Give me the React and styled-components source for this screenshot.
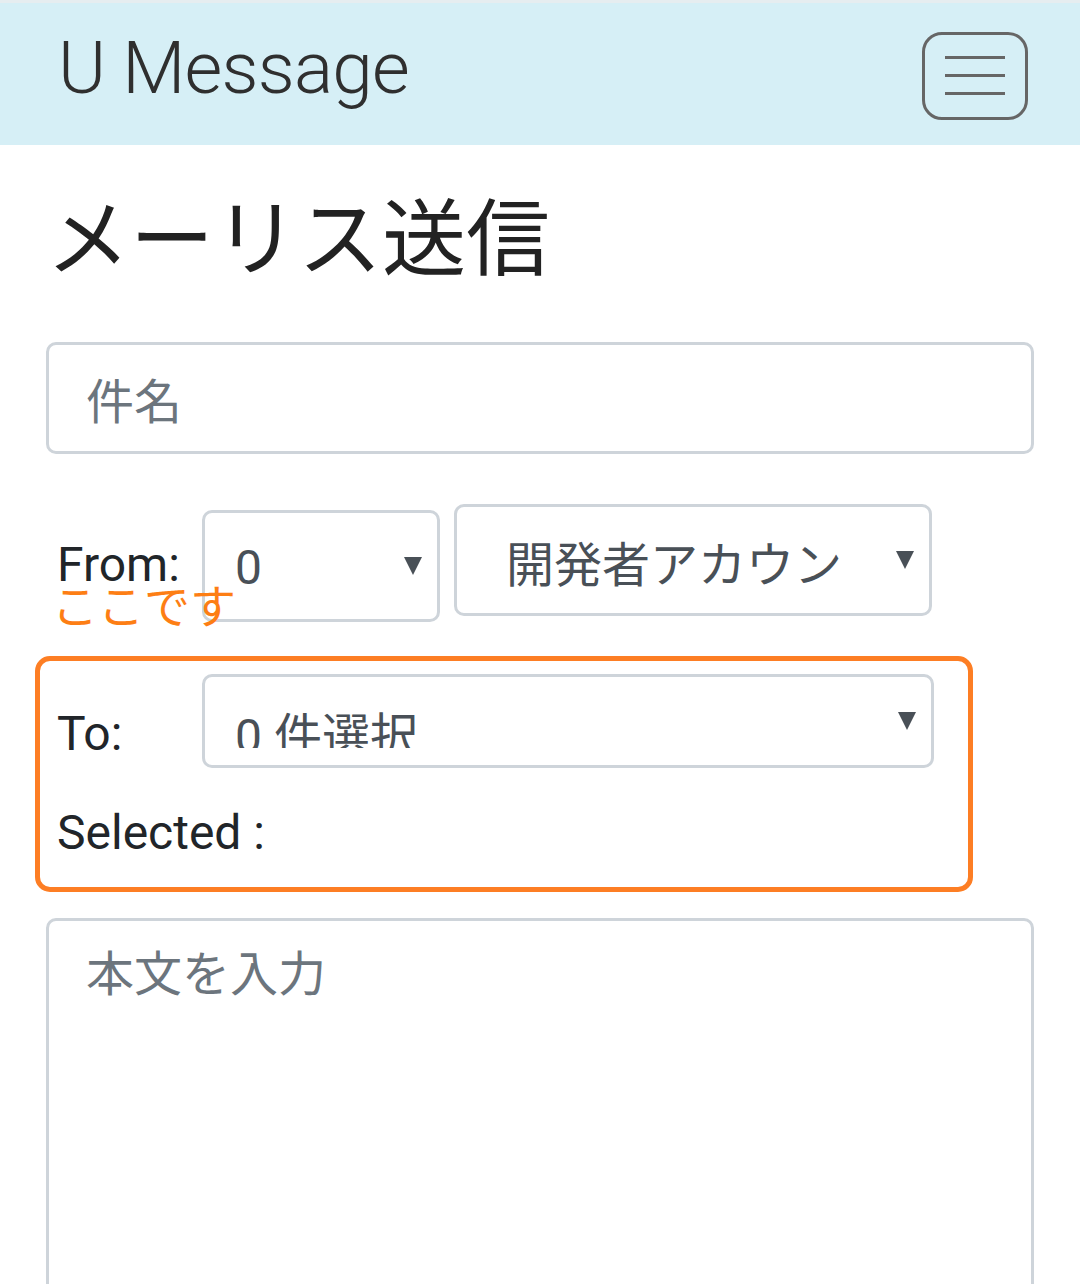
import React from "react";
import styled, { createGlobalStyle } from "styled-components";

const GlobalStyle = createGlobalStyle`
  body {
    margin: 0;
    background: #fff;
    font-family: Roboto, "Noto Sans CJK JP", sans-serif;
    color: #212529;
  }
`;

const App = () => {
  return (
    <>
      <GlobalStyle />
      <Navbar>
        <Brand>U Message</Brand>
        <Toggler aria-label="menu">
          <TogglerLine />
          <TogglerLine />
          <TogglerLine />
        </Toggler>
      </Navbar>

      <Page>
        <Title>メーリス送信</Title>
        <TextInput>件名</TextInput>

        <FromRow>
          <Label>
            <LabelText>From:</LabelText>
            <Hint>ここです</Hint>
          </Label>
          <Select width={238} height={112} padLeft={30} padTop={19} offset={6}>
            <SelectValue>0</SelectValue>
            <Arrow />
          </Select>
          <Select width={478} height={112} padLeft={49} padTop={23}>
            <SelectValue gap={62}>開発者アカウント</SelectValue>
            <Arrow />
          </Select>
        </FromRow>

        <Highlight>
          <ToRow>
            <Label narrow>
              <LabelText offset={24}>To:</LabelText>
            </Label>
            <Select width={732} height={94} padLeft={30} padTop={24} clip>
              <SelectValue clip>0 件選択</SelectValue>
              <Arrow />
            </Select>
          </ToRow>
          <SelectedText>Selected :</SelectedText>
        </Highlight>

        <TextArea>本文を入力</TextArea>
      </Page>
    </>
  );
};

const Navbar = styled.nav`
  height: 142px;
  border-top: 3px solid #e6edf0;
  background: #d6eff6;
  display: flex;
  align-items: center;
  justify-content: space-between;
  padding: 0 52px 0 58px;
`;
const Brand = styled.div`
  font-family: Roboto, sans-serif;
  font-weight: 300;
  font-size: 73px;
  color: #2f2f2f;
  margin-top: -12px;
  letter-spacing: -0.8px;
`;
const Toggler = styled.button`
  width: 106px;
  height: 88px;
  box-sizing: border-box;
  border: 3px solid #666;
  border-radius: 20px;
  background: transparent;
  display: flex;
  flex-direction: column;
  align-items: center;
  justify-content: center;
  gap: 15px;
  padding: 0;
  margin-top: 3px;
`;
const TogglerLine = styled.span`
  display: block;
  width: 60px;
  height: 3px;
  background: #666;
`;
const Page = styled.main`
  padding: 0 46px;
`;
const Title = styled.h1`
  margin: 28px 0 49px 0;
  font-family: "Noto Sans CJK JP", sans-serif;
  font-weight: 400;
  font-size: 84px;
  line-height: 120px;
  color: #222;
`;
const TextInput = styled.div`
  box-sizing: border-box;
  height: 112px;
  border: 3px solid #ced4da;
  border-radius: 10px;
  padding: 0 37px;
  display: flex;
  align-items: center;
  font-size: 48px;
  color: #6c757d;
`;
const FromRow = styled.div`
  display: flex;
  align-items: flex-start;
  margin: 50px 0 0 9px;
`;
const Label = styled.div`
  width: ${p => (p.narrow ? 145 : 147)}px;
  flex-shrink: 0;
  display: flex;
  flex-direction: column;
  white-space: nowrap;
  padding-left: ${p => (p.narrow ? 0 : 2)}px;
  box-sizing: border-box;
`;
const LabelText = styled.div`
  font-size: 48px;
  line-height: 72px;
  color: #212529;
  margin-top: ${p => p.offset ?? 25}px;
`;
const Hint = styled.div`
  font-family: "Noto Sans CJK JP", sans-serif;
  font-size: 46px;
  line-height: 48px;
  color: #fd7e14;
  margin: -22px 0 0 -5px;
  position: relative;
  z-index: 1;
`;
const Select = styled.div`
  box-sizing: border-box;
  width: ${p => p.width}px;
  height: ${p => p.height}px;
  margin-top: ${p => p.offset || 0}px;
  margin-right: 14px;
  flex-shrink: 0;
  border: 3px solid #ced4da;
  border-radius: 10px;
  background: #fff;
  padding: ${p => p.padTop}px 14px 0 ${p => p.padLeft}px;
  display: flex;
  align-items: flex-start;
  position: relative;
`;
const SelectValue = styled.div`
  flex: 1;
  font-size: 48px;
  line-height: 72px;
  height: ${p => (p.clip ? "47px" : "72px")};
  overflow: hidden;
  white-space: nowrap;
  color: #495057;
  margin-right: ${p => p.gap ?? 40}px;
`;
const Arrow = styled.span`
  position: absolute;
  right: 15px;
  top: 50%;
  margin-top: -9px;
  width: 0;
  height: 0;
  border-left: 9px solid transparent;
  border-right: 9px solid transparent;
  border-top: 18px solid #495057;
`;
const Highlight = styled.div`
  box-sizing: border-box;
  width: 938px;
  margin: 29px 0 0 -11px;
  border: 5px solid #fd7e24;
  border-radius: 15px;
  padding: 13px 15px 18px 17px;
`;
const ToRow = styled.div`
  display: flex;
  align-items: flex-start;
`;
const SelectedText = styled.div`
  font-size: 48px;
  line-height: 72px;
  margin-top: 27px;
  color: #212529;
`;
const TextArea = styled.div`
  box-sizing: border-box;
  height: 420px;
  margin-top: 26px;
  border: 3px solid #ced4da;
  border-radius: 10px;
  padding: 18px 37px;
  font-size: 48px;
  line-height: 72px;
  color: #6c757d;
`;

export default App;
